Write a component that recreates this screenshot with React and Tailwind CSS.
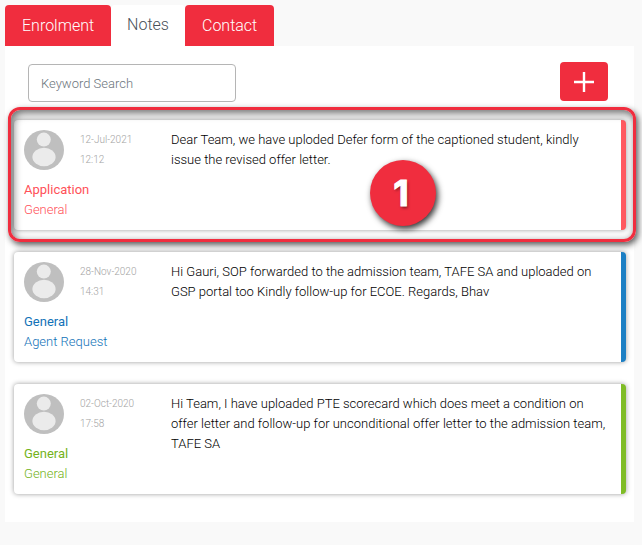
import { useState } from "react";

const notes = [
  {
    date: "12-Jul-2021",
    time: "12:12",
    type: "Application",
    category: "General",
    text: "Dear Team, we have uploded Defer form of the captioned student, kindly issue the revised offer letter.",
    color: "text-[#ff5058]",
    border: "border-[#ff5a60]",
    callout: 1
  },
  {
    date: "28-Nov-2020",
    time: "14:31",
    type: "General",
    category: "Agent Request",
    text: "Hi Gauri, SOP forwarded to the admission team, TAFE SA and uploaded on GSP portal too Kindly follow-up for ECOE. Regards, Bhav",
    color: "text-[#1272b8]",
    border: "border-[#1c7fc4]"
  },
  {
    date: "02-Oct-2020",
    time: "17:58",
    type: "General",
    category: "General",
    text: "Hi Team, I have uploaded PTE scorecard which does meet a condition on offer letter and follow-up for unconditional offer letter to the admission team, TAFE SA",
    color: "text-[#74b31a]",
    border: "border-[#7fbc26]"
  }
];

const tabs = ["Enrolment", "Notes", "Contact"];

const Avatar = () => (
  <svg viewBox="0 0 40 40" className="w-10 h-10 shrink-0" aria-hidden="true">
    <circle cx="20" cy="20" r="20" fill="#bfbfbf" />
    <circle cx="19.8" cy="9.6" r="7" fill="#ebebeb" />
    <ellipse cx="20" cy="27" rx="11.6" ry="9.2" fill="#ebebeb" />
  </svg>
);

const Callout = ({ number }) => (
  <>
    <div className="pointer-events-none absolute -top-[13px] -bottom-3 -left-1.5 -right-2.5 rounded-xl border-3 border-[#f02d3e] shadow-[2px_3px_6px_rgba(0,0,0,0.65),inset_2px_3px_8px_rgba(0,0,0,0.6)]" />
    <div className="absolute top-10 left-[356px] flex h-[66px] w-[66px] items-center justify-center rounded-full bg-[#f02d3e] shadow-[2px_3px_6px_rgba(0,0,0,0.8)]">
      <span className="pr-1 font-[Inter,sans-serif] text-4xl font-bold text-white [-webkit-text-stroke:1px_white] [text-shadow:1px_2px_3px_rgba(0,0,0,0.5)]">{number}</span>
    </div>
  </>
);

const NoteCard = ({ note }) => (
  <li className="relative">
    {note.callout && <Callout number={note.callout} />}
    <article className={`flex h-[110px] rounded border-r-5 bg-white pt-2.5 pl-2.5 pr-3 shadow-[0_0_5px_rgba(0,0,0,0.4)] ${note.border}`}>
      <div className="w-[147px] shrink-0">
        <div className="flex gap-4">
          <Avatar />
          <div className="text-[10px] leading-5 text-[#a3a3a3]">
            <p>{note.date}</p>
            <p>{note.time}</p>
          </div>
        </div>
        <div className={`pt-2.5 ${note.color}`}>
          <p className="font-normal">{note.type}</p>
          <p>{note.category}</p>
        </div>
      </div>
      <p className="min-w-0 flex-1 text-black">{note.text}</p>
    </article>
  </li>
);

const App = () => {
  const [active, setActive] = useState("Notes");
  const [keyword, setKeyword] = useState("");

  return (
    <div className="min-h-screen bg-[#f9f9f9] pt-[5px] pr-2 pb-6 pl-[5px] font-[Roboto,sans-serif] text-[13px] leading-5 font-light">
      {/* Tabs */}
      <nav className="flex">
        {tabs.map((tab) => (
          <button
            key={tab}
            type="button"
            onClick={() => setActive(tab)}
            className={`h-[41px] rounded-t text-base ${
              active === tab ? "bg-white px-4 pb-0.5 text-[#495057]" : "bg-[#f02d3e] px-[17px] text-white"
            }`}>
            {tab}
          </button>
        ))}
      </nav>

      <main className="bg-white pt-4 pr-2 pb-7 pl-[9px]">
        {/* Search */}
        <div className="flex items-start justify-between pr-[18px] pl-3.5">
          <input
            type="text"
            aria-label="Keyword Search"
            placeholder="Keyword Search"
            value={keyword}
            onChange={(e) => setKeyword(e.target.value)}
            className="mt-0.5 h-[38px] w-52 rounded border border-[#b5b5b5] bg-white px-3 placeholder:text-[#6c757d] focus:outline-none"
          />
          <button
            type="button"
            aria-label="Add note"
            className="flex h-[39px] w-12 items-center justify-center rounded bg-[#f02d3e] text-white">
            <svg viewBox="0 0 22 22" className="h-[22px] w-[22px]" stroke="currentColor" strokeWidth="2.4">
              <path d="M11 1v20M1 11h20" />
            </svg>
          </button>
        </div>

        {/* Notes */}
        <ul className="space-y-[22px] pt-[18px]">
          {notes.map((note) => (
            <NoteCard key={note.date} note={note} />
          ))}
        </ul>
      </main>
    </div>
  );
};

export default App;
